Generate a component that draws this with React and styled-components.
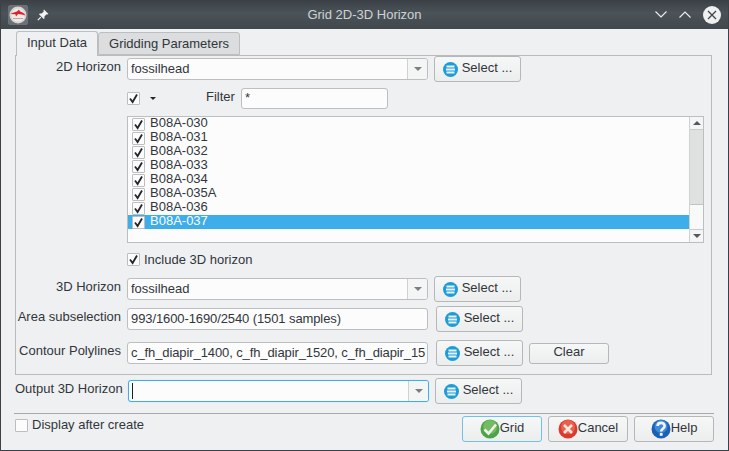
import React from "react";
import styled, { createGlobalStyle } from "styled-components";

const Global = createGlobalStyle`
  html, body { margin: 0; padding: 0; background: #eff0f1; }
  * { box-sizing: border-box; }
`;

const Window = styled.div`
  width: 729px;
  height: 451px;
  display: flex;
  flex-direction: column;
  overflow: hidden;
  background: #eff0f1;
  border-left: 1px solid #3b4147;
  border-right: 1px solid #3b4147;
  border-bottom: 1px solid #3b4147;
  font-family: "Liberation Sans", Arial, sans-serif;
  font-size: 13px;
  color: #31363b;
`;

const TitleBar = styled.div`
  height: 29px;
  flex: none;
  display: flex;
  align-items: center;
  background: linear-gradient(#3a4046, #4b5359 45%, #40474d);
  color: #cfd2d4;
`;

const TitleSide = styled.div`
  flex: 1;
  display: flex;
  align-items: center;
  justify-content: ${(p) => (p.$right ? "flex-end" : "flex-start")};
  gap: ${(p) => (p.$right ? "12px" : "9px")};
  padding: ${(p) => (p.$right ? "0 7px 0 0" : "0 0 0 7px")};
`;

const Title = styled.div`
  flex: none;
  line-height: 29px;
`;

const AppBadge = styled.div`
  width: 20px;
  height: 20px;
  display: flex;
  border: 1px solid #6d7277;
  border-radius: 2px;
  background: #6a7075;
`;

const Body = styled.div`
  flex: 1;
  display: flex;
  flex-direction: column;
`;

const TabStrip = styled.div`
  display: flex;
  align-items: flex-end;
  height: 26px;
  padding-left: 15px;
`;

const Tab = styled.div`
  display: flex;
  align-items: center;
  justify-content: center;
  width: ${(p) => p.$w}px;
  height: ${(p) => (p.$active ? 25 : 23)}px;
  margin-bottom: ${(p) => (p.$active ? "-1px" : "0")};
  padding-bottom: ${(p) => (p.$active ? 3 : 1)}px;
  position: relative;
  z-index: ${(p) => (p.$active ? 1 : 0)};
  background: ${(p) => (p.$active ? "#eff0f1" : "#dcddde")};
  border: 1px solid #bcbebf;
  border-bottom: ${(p) => (p.$active ? "none" : "1px solid #bcbebf")};
  border-radius: 3px 3px 0 0;
`;

const Panel = styled.div`
  width: 697px;
  height: 320px;
  margin-left: 14px;
  display: flex;
  flex-direction: column;
  border: 1px solid #b9bbbc;
`;

const Row = styled.div`
  display: flex;
  align-items: center;
  height: ${(p) => p.$h || 26}px;
  margin-top: ${(p) => p.$mt || 0}px;
  padding-left: ${(p) => p.$pl || 0}px;
`;

const Label = styled.div`
  width: ${(p) => p.$w || 105}px;
  margin-right: 6px;
  padding-bottom: 5px;
  text-align: right;
  white-space: nowrap;
`;

const Field = styled.div`
  width: ${(p) => p.$w || 301}px;
  height: ${(p) => p.$h || 22}px;
  flex: none;
  display: flex;
  align-items: center;
  padding-left: 3px;
  padding-bottom: 2px;
  overflow: hidden;
  white-space: nowrap;
  background: #fcfcfc;
  border: 1px solid ${(p) => (p.$focus ? "#3daee9" : "#bcbebf")};
  border-radius: 3px;
  box-shadow: ${(p) => (p.$focus ? "0 0 1px #8fd0f2" : "none")};
`;

const FieldText = styled.div`
  flex: 1;
  overflow: hidden;
  letter-spacing: ${(p) => (p.$narrow ? "-0.1px" : "normal")};
`;

const Caret = styled.div`
  width: 1px;
  height: 16px;
  margin-top: 2px;
  background: #1b1e20;
`;

const ComboArrow = styled.div`
  width: 20px;
  height: 20px;
  margin-bottom: -2px;
  flex: none;
  display: flex;
  align-items: center;
  justify-content: center;
  background: #f4f5f5;
  border-left: 1px solid #cfd1d2;
  &::after {
    content: "";
    border-left: 4px solid transparent;
    border-right: 4px solid transparent;
    border-top: 4px solid #7b7f82;
  }
`;

const Button = styled.div`
  width: ${(p) => p.$w || 87}px;
  height: ${(p) => p.$h || 26}px;
  margin-left: ${(p) => p.$ml || 0}px;
  flex: none;
  display: flex;
  align-items: center;
  justify-content: center;
  gap: ${(p) => p.$gap || 0}px;
  background: linear-gradient(#f6f7f7, #eceded);
  border: 1px solid ${(p) => (p.$primary ? "#6fc0ea" : "#b5b7b8")};
  border-radius: 3px;
`;

const ButtonText = styled.span`
  margin-bottom: 3px;
`;

const CheckBox = styled.div`
  width: 13px;
  height: 13px;
  flex: none;
  display: flex;
  align-items: center;
  justify-content: center;
  background: #fcfcfc;
  border: 1px solid #bcbebf;
  border-radius: 1px;
`;

const MenuArrow = styled.div`
  margin-left: 10px;
  border-left: 3px solid transparent;
  border-right: 3px solid transparent;
  border-top: 3px solid #232629;
`;

const FilterLabel = styled.div`
  margin-left: 50px;
  margin-right: 6px;
  margin-bottom: 5px;
`;

const List = styled.div`
  width: 577px;
  height: 127px;
  margin: 7px 0 0 111px;
  display: flex;
  background: #fcfcfc;
  border: 1px solid #bcbebf;
`;

const ListBody = styled.div`
  flex: 1;
  overflow: hidden;
`;

const ListRow = styled.div`
  height: 14px;
  display: flex;
  padding-left: 4px;
  background: ${(p) => (p.$selected ? "#3daee9" : "transparent")};
  color: ${(p) => (p.$selected ? "#fcfcfc" : "#31363b")};
`;

const ListText = styled.div`
  margin-left: 5px;
  line-height: 12px;
`;

const ListCheck = styled(CheckBox)`
  margin-top: 1px;
`;

const ScrollBar = styled.div`
  width: 14px;
  flex: none;
  display: flex;
  flex-direction: column;
  border-left: 1px solid #cfd1d2;
  background: #f8f9f9;
`;

const ScrollStep = styled.div`
  height: 13px;
  flex: none;
  display: flex;
  align-items: center;
  justify-content: center;
  background: #f4f5f5;
  border-${(p) => (p.$down ? "top" : "bottom")}: 1px solid #c9cbcc;
  &::after {
    content: "";
    border-left: 4px solid transparent;
    border-right: 4px solid transparent;
    border-${(p) => (p.$down ? "top" : "bottom")}: 4px solid #55595c;
  }
`;

const ScrollHandle = styled.div`
  height: 75px;
  flex: none;
  background: #dfe1e1;
  border-bottom: 1px solid #c0c2c3;
`;

const ScrollTrack = styled.div`
  flex: 1;
`;

const IncludeText = styled.div`
  margin-left: 4px;
`;

const Separator = styled.div`
  height: 1px;
  margin: 9px 14px 0 13px;
  flex: none;
  background: #a6a8a9;
`;

const Footer = styled.div`
  display: flex;
  justify-content: space-between;
  margin-top: 2px;
  padding: 0 14px;
`;

const DisplayOption = styled.div`
  display: flex;
  align-items: center;
  gap: 4px;
  height: 17px;
  margin-top: 1px;
`;

const DisplayText = styled.span`
  margin-bottom: 2px;
`;

const ButtonGroup = styled.div`
  display: flex;
  gap: 6px;
`;

const PinIcon = () => (
  <svg width="12" height="12" viewBox="0 0 12 12">
    <path d="M7 0.5 L11.5 5 L10.4 5.6 L9.6 5.2 L7.4 7.4 L7.5 9.2 L6.7 10 L2 5.3 L2.8 4.5 L4.6 4.6 L6.8 2.4 L6.4 1.6 Z" fill="#f2f3f4" />
    <path d="M3.8 8.2 L0.8 11.2" stroke="#f2f3f4" strokeWidth="1.2" />
  </svg>
);

const AppIcon = () => (
  <svg width="18" height="18" viewBox="0 0 18 18">
    <circle cx="9" cy="9" r="8.5" fill="#d9d5d2" />
    <circle cx="9" cy="9" r="6.6" fill="#ece9e7" />
    <path d="M1.5 8 C4 6.5 6 6 8 5.5 L10 3.5 L11 5.6 C13 6 15 7 16.5 9.5 L13 8.4 L9 8 L7 10.5 L6.4 8.2 Z" fill="#d8232a" />
    <path d="M4 12.5 H14" stroke="#b9a9a5" strokeWidth="1" />
  </svg>
);

const ChevronIcon = ({ up }) => (
  <svg width="12" height="7" viewBox="0 0 12 7">
    <path d={up ? "M0.5 6.5 L6 1 L11.5 6.5" : "M0.5 0.5 L6 6 L11.5 0.5"} fill="none" stroke="#eff0f1" strokeWidth="1.1" />
  </svg>
);

const CloseIcon = () => (
  <svg width="18" height="18" viewBox="0 0 18 18">
    <circle cx="9" cy="9" r="9" fill="#eff0f1" />
    <path d="M5 5 L13 13 M13 5 L5 13" stroke="#3f464c" strokeWidth="1.3" />
  </svg>
);

const TickIcon = () => (
  <svg width="11" height="11" viewBox="0 0 11 11">
    <path d="M2 5.5 L4.6 9 L9 1.5" fill="none" stroke="#232629" strokeWidth="1.8" />
  </svg>
);

const SelectIcon = () => (
  <svg width="15" height="15" viewBox="0 0 15 15">
    <circle cx="7.5" cy="7.5" r="7.5" fill="#1f9bd8" />
    <path d="M3.5 4.5 H11.5 M3 7.5 H12 M3.5 10.5 H11.5" stroke="#e4f3fb" strokeWidth="1.8" />
  </svg>
);

const GridIcon = () => (
  <svg width="20" height="20" viewBox="0 0 20 20">
    <circle cx="10" cy="10" r="9.5" fill="#4ea24a" />
    <circle cx="10" cy="8" r="7" fill="#74bb63" />
    <path d="M4.5 10.5 L8.5 14.5 L16 5.5" fill="none" stroke="#eef3e8" strokeWidth="2.6" />
  </svg>
);

const CancelIcon = () => (
  <svg width="20" height="20" viewBox="0 0 20 20">
    <circle cx="10" cy="10" r="9.5" fill="#dc3a2e" />
    <circle cx="10" cy="8" r="7" fill="#e9604f" />
    <path d="M6 6 L14 14 M14 6 L6 14" stroke="#f6e6de" strokeWidth="2.6" />
  </svg>
);

const HelpIcon = () => (
  <svg width="20" height="20" viewBox="0 0 20 20">
    <circle cx="10" cy="10" r="9.5" fill="#1a62b8" />
    <circle cx="10" cy="7.5" r="6.5" fill="#3f8ada" />
    <path d="M6.6 7 C6.6 2.8 13.6 2.8 13.6 7 C13.6 9.8 10.2 9.6 10.2 12.4" fill="none" stroke="#f2f6fb" strokeWidth="2.6" />
    <rect x="8.8" y="14" width="2.8" height="2.8" fill="#f2f6fb" />
  </svg>
);

const SelectButton = ({ ml }) => (
  <Button $ml={ml} $gap={4}>
    <SelectIcon />
    <ButtonText>Select ...</ButtonText>
  </Button>
);

const horizons = [
  "B08A-030",
  "B08A-031",
  "B08A-032",
  "B08A-033",
  "B08A-034",
  "B08A-035A",
  "B08A-036",
  "B08A-037",
];

const App = () => {
  return (
    <Window>
      <Global />
      <TitleBar>
        <TitleSide>
          <AppBadge>
            <AppIcon />
          </AppBadge>
          <PinIcon />
        </TitleSide>
        <Title>Grid 2D-3D Horizon</Title>
        <TitleSide $right>
          <ChevronIcon />
          <ChevronIcon up />
          <CloseIcon />
        </TitleSide>
      </TitleBar>
      <Body>
        <TabStrip>
          <Tab $active $w={82}>Input Data</Tab>
          <Tab $w={142}>Gridding Parameters</Tab>
        </TabStrip>
        <Panel>
          <Row>
            <Label>2D Horizon</Label>
            <Field>
              <FieldText>fossilhead</FieldText>
              <ComboArrow />
            </Field>
            <SelectButton ml={6} />
          </Row>
          <Row $h={21} $mt={6} $pl={111}>
            <CheckBox>
              <TickIcon />
            </CheckBox>
            <MenuArrow />
            <FilterLabel>Filter</FilterLabel>
            <Field $w={147} $h={21}>*</Field>
          </Row>
          <List>
            <ListBody>
              {horizons.map((name, i) => (
                <ListRow key={name} $selected={i === horizons.length - 1}>
                  <ListCheck>
                    <TickIcon />
                  </ListCheck>
                  <ListText>{name}</ListText>
                </ListRow>
              ))}
            </ListBody>
            <ScrollBar>
              <ScrollStep />
              <ScrollHandle />
              <ScrollTrack />
              <ScrollStep $down />
            </ScrollBar>
          </List>
          <Row $h={15} $mt={9} $pl={111}>
            <CheckBox>
              <TickIcon />
            </CheckBox>
            <IncludeText>Include 3D horizon</IncludeText>
          </Row>
          <Row $mt={9}>
            <Label>3D Horizon</Label>
            <Field>
              <FieldText>fossilhead</FieldText>
              <ComboArrow />
            </Field>
            <SelectButton ml={6} />
          </Row>
          <Row $mt={4}>
            <Label>Area subselection</Label>
            <Field>
              <FieldText $narrow>993/1600-1690/2540 (1501 samples)</FieldText>
            </Field>
            <SelectButton ml={8} />
          </Row>
          <Row $mt={8}>
            <Label>Contour Polylines</Label>
            <Field>
              <FieldText $narrow>c_fh_diapir_1400, c_fh_diapir_1520, c_fh_diapir_15</FieldText>
            </Field>
            <SelectButton ml={8} />
            <Button $w={80} $h={21} $ml={6}>
              <ButtonText>Clear</ButtonText>
            </Button>
          </Row>
        </Panel>
        <Row $mt={3} $pl={14}>
          <Label $w={107}>Output 3D Horizon</Label>
          <Field $focus>
            <FieldText>
              <Caret />
            </FieldText>
            <ComboArrow />
          </Field>
          <SelectButton ml={6} />
        </Row>
        <Separator />
        <Footer>
          <DisplayOption>
            <CheckBox />
            <DisplayText>Display after create</DisplayText>
          </DisplayOption>
          <ButtonGroup>
            <Button $w={80} $primary>
              <GridIcon />
              <ButtonText>Grid</ButtonText>
            </Button>
            <Button $w={80}>
              <CancelIcon />
              <ButtonText>Cancel</ButtonText>
            </Button>
            <Button $w={80}>
              <HelpIcon />
              <ButtonText>Help</ButtonText>
            </Button>
          </ButtonGroup>
        </Footer>
      </Body>
    </Window>
  );
};

export default App;
